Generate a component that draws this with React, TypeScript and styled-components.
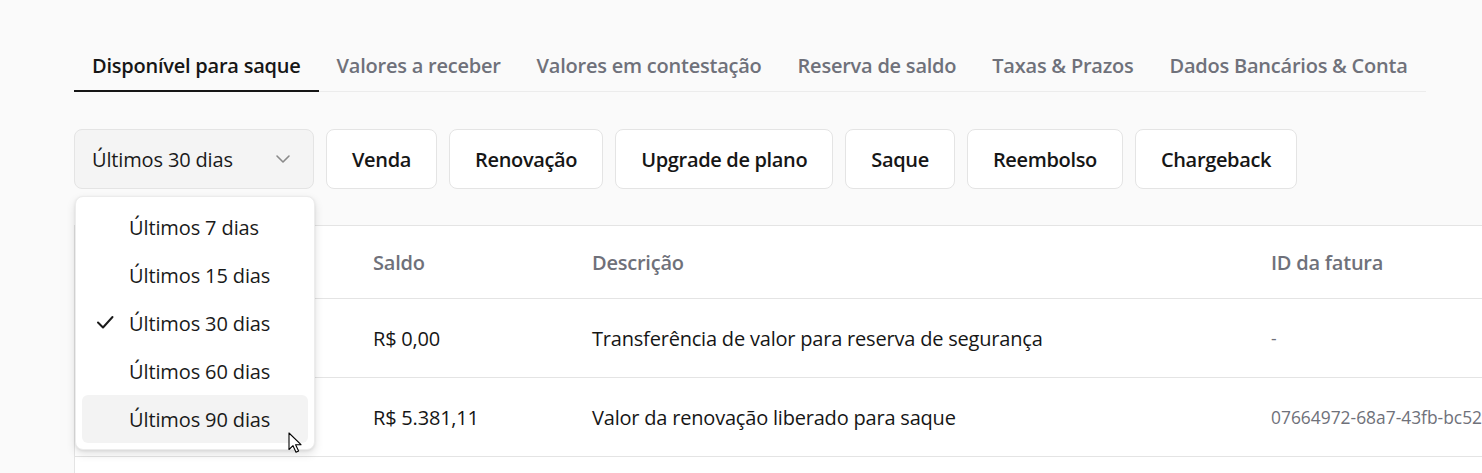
import React from "react";
import styled, { createGlobalStyle } from "styled-components";

const Global = createGlobalStyle`
  html, body { margin: 0; padding: 0; background: #fafafa; overflow: hidden; }
  body { font-family: "Open Sans", "Noto Sans", sans-serif; color: #1a1a1a; }
  * { box-sizing: border-box; }
`;

const Page = styled.div`
  position: relative;
  width: 1482px;
  height: 473px;
  padding: 40px 0 0 74px;
  overflow: hidden;
`;

const TabBar = styled.div`
  display: flex;
  width: 1352px;
  height: 52px;
  border-bottom: 1px solid #ececec;
`;

const Tab = styled.div<{ $active?: boolean }>`
  display: flex;
  align-items: center;
  padding: 0 18px;
  margin-bottom: -1px;
  font-size: 20px;
  font-weight: 600;
  letter-spacing: -0.23px;
  white-space: nowrap;
  color: ${(p) => (p.$active ? "#161616" : "#6f717a")};
  border-bottom: 2px solid ${(p) => (p.$active ? "#161616" : "transparent")};
`;

const FilterRow = styled.div`
  display: flex;
  gap: 12px;
  margin-top: 37px;
  height: 60px;
`;

const SelectWrap = styled.div`
  position: relative;
  width: 240px;
`;

const SelectBox = styled.div`
  display: flex;
  align-items: center;
  justify-content: space-between;
  height: 60px;
  padding: 0 22px 0 17px;
  background: #f4f4f4;
  border: 1px solid #e4e4e4;
  border-radius: 8px;
  font-size: 20px;
  letter-spacing: -0.15px;
  color: #1a1a1a;
`;

const Chip = styled.div`
  display: flex;
  align-items: center;
  height: 60px;
  padding: 0 25px;
  background: #ffffff;
  border: 1px solid #e4e4e4;
  border-radius: 8px;
  font-size: 20px;
  font-weight: 600;
  letter-spacing: -0.34px;
  white-space: nowrap;
  color: #161616;
`;

const Menu = styled.div`
  position: absolute;
  top: 67px;
  left: 1px;
  width: 240px;
  padding: 6px;
  background: #ffffff;
  border: 1px solid #ececec;
  border-radius: 8px;
  box-shadow: 0 4px 10px rgba(0, 0, 0, 0.12), 0 1px 3px rgba(0, 0, 0, 0.08);
  z-index: 10;
`;

const MenuItem = styled.div<{ $hover?: boolean }>`
  position: relative;
  display: flex;
  align-items: center;
  height: 48px;
  padding-left: 47px;
  border-radius: 6px;
  font-size: 20px;
  letter-spacing: -0.12px;
  color: #1a1a1a;
  background: ${(p) => (p.$hover ? "#f3f3f3" : "transparent")};
`;

const Check = styled.svg`
  position: absolute;
  left: 14px;
  top: 15px;
`;

const Table = styled.div`
  margin-top: 36px;
  width: 1500px;
  background: #ffffff;
  border-top: 1px solid #e4e4e4;
  border-left: 1px solid #e4e4e4;
`;

const Row = styled.div<{ $head?: boolean }>`
  display: grid;
  grid-template-columns: 274px 219px 679px 328px;
  align-items: center;
  height: ${(p) => (p.$head ? "73px" : "79px")};
  border-bottom: 1px solid #e4e4e4;
`;

const Cell = styled.div<{ $head?: boolean; $muted?: boolean }>`
  padding-left: 24px;
  white-space: nowrap;
  overflow: hidden;
  font-size: ${(p) => (p.$muted ? "17.4px" : "20px")};
  font-weight: ${(p) => (p.$head ? 600 : 400)};
  letter-spacing: ${(p) => (p.$muted ? "0px" : p.$head ? "-0.23px" : "-0.2px")};
  color: ${(p) => (p.$head || p.$muted ? "#6f717a" : "#161616")};
`;

const Cursor = styled.svg`
  position: absolute;
  left: 288px;
  top: 432px;
  z-index: 20;
`;

const tabs = [
  "Disponível para saque",
  "Valores a receber",
  "Valores em contestação",
  "Reserva de saldo",
  "Taxas & Prazos",
  "Dados Bancários & Conta",
];

const chips = ["Venda", "Renovação", "Upgrade de plano", "Saque", "Reembolso", "Chargeback"];

const options = ["Últimos 7 dias", "Últimos 15 dias", "Últimos 30 dias", "Últimos 60 dias", "Últimos 90 dias"];

const rows = [
  { saldo: "R$ 0,00", desc: "Transferência de valor para reserva de segurança", id: "-" },
  { saldo: "R$ 5.381,11", desc: "Valor da renovação liberado para saque", id: "07664972-68a7-43fb-bc52" },
];

export default function App() {
  return (
    <Page>
      <Global />
      <TabBar>
        {tabs.map((t, i) => (
          <Tab key={t} $active={i === 0}>
            {t}
          </Tab>
        ))}
      </TabBar>

      <FilterRow>
        <SelectWrap>
          <SelectBox>
            <span>Últimos 30 dias</span>
            <svg width="16" height="10" viewBox="0 0 16 10" fill="none">
              <path d="M2 2l6 6 6-6" stroke="#8a8a8a" strokeWidth="1.6" strokeLinecap="round" strokeLinejoin="round" />
            </svg>
          </SelectBox>
          <Menu>
            {options.map((o, i) => (
              <MenuItem key={o} $hover={i === 4}>
                {i === 2 && (
                  <Check width="18" height="16" viewBox="0 0 18 16" fill="none">
                    <path d="M2 8.5l5 5L16.5 3" stroke="#1a1a1a" strokeWidth="2" strokeLinecap="round" strokeLinejoin="round" />
                  </Check>
                )}
                {o}
              </MenuItem>
            ))}
          </Menu>
        </SelectWrap>
        {chips.map((c) => (
          <Chip key={c}>{c}</Chip>
        ))}
      </FilterRow>

      <Table>
        <Row $head>
          <Cell $head />
          <Cell $head>Saldo</Cell>
          <Cell $head>Descrição</Cell>
          <Cell $head>ID da fatura</Cell>
        </Row>
        {rows.map((r) => (
          <Row key={r.saldo}>
            <Cell />
            <Cell>{r.saldo}</Cell>
            <Cell>{r.desc}</Cell>
            <Cell $muted>{r.id}</Cell>
          </Row>
        ))}
        <Row />
      </Table>

      <Cursor width="14" height="22" viewBox="0 0 14 22">
        <path d="M1 1v16.5l4-3.8 3 6.6 2.6-1.2-3-6.4H13z" fill="#ffffff" stroke="#000000" strokeWidth="1.1" strokeLinejoin="round" />
      </Cursor>
    </Page>
  );
}
